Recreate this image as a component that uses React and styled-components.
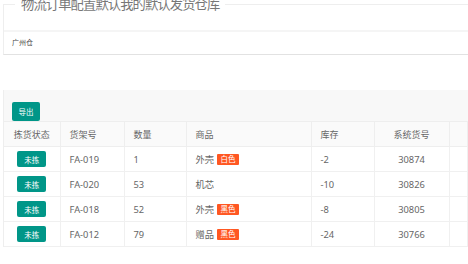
import React from 'react';
import styled, { createGlobalStyle } from 'styled-components';

const Global = createGlobalStyle`
  html, body { margin: 0; padding: 0; background: #fff; }
  body {
    font-family: "Noto Sans", "Noto Sans CJK SC", sans-serif;
    color: #666;
    overflow: hidden;
  }
`;

const Page = styled.div`
  padding-left: 3px;
`;

const Fieldset = styled.fieldset`
  margin: -6px 0 0 0;
  padding: 0;
  min-width: 0;
  border: 1px solid #eee;
  border-right: none;
  border-bottom-color: #e2e2e2;
`;

const Legend = styled.legend`
  margin-left: 11px;
  padding: 0 6px;
  font-size: 13.3px;
  line-height: 20px;
  letter-spacing: -0.9px;
  color: #777;
  font-family: "Noto Sans CJK SC", sans-serif;
  font-weight: 400;
`;

const Card = styled.div`
  margin-top: -9px;
  background: #fff;
`;

const CardHeader = styled.div`
  height: 25px;
  border-bottom: 2px solid #f5f5f5;
`;

const CardBody = styled.div`
  padding: 5px 8px;
  font-size: 7px;
  line-height: 12px;
  color: #444;
`;

const TableBox = styled.div`
  margin-top: 35px;
  border-left: 1px solid #eee;
`;

const Toolbar = styled.div`
  height: 32px;
  box-sizing: border-box;
  padding: 8px 0 0 8px;
  background: #f8f8f8;
  border-bottom: 1px solid #eee;
`;

const Button = styled.button`
  display: inline-flex;
  align-items: center;
  justify-content: center;
  width: ${p => p.$w || 28}px;
  height: ${p => p.$h || 19}px;
  padding: 0;
  border: none;
  border-radius: 2px;
  background: #009688;
  color: #fff;
  font-family: "Noto Sans CJK SC", sans-serif;
  font-size: 7.5px;
  cursor: pointer;
`;

const Table = styled.table`
  width: 100%;
  border-collapse: collapse;
  table-layout: fixed;
`;

const Th = styled.th`
  height: 24px;
  padding: 0 ${p => (p.$center ? 0 : 9)}px;
  text-align: ${p => (p.$center ? 'center' : 'left')};
  font-weight: 400;
  font-size: 9px;
  color: #666;
  background: #fafafa;
  border-right: 1px solid #eee;
  border-bottom: 1px solid #eee;
  white-space: nowrap;
`;

const Td = styled.td`
  height: 24px;
  padding: 0 ${p => (p.$center ? 0 : 9)}px;
  text-align: ${p => (p.$center ? 'center' : 'left')};
  font-size: 9.3px;
  color: #666;
  background: #fff;
  border-right: 1px solid #f0f0f0;
  border-bottom: 1px solid #f0f0f0;
  white-space: nowrap;
  vertical-align: middle;
`;

const Tag = styled.span`
  display: inline-block;
  margin-left: 3px;
  padding: 0 3.5px;
  height: 11px;
  line-height: 11px;
  font-size: 7.5px;
  color: #fff;
  background: #ff5722;
  border-radius: 1px;
  vertical-align: 1px;
`;

const rows = [
  { shelf: 'FA-019', qty: 1, goods: '外壳', tag: '白色', stock: -2, code: 30874 },
  { shelf: 'FA-020', qty: 53, goods: '机芯', tag: null, stock: -10, code: 30826 },
  { shelf: 'FA-018', qty: 52, goods: '外壳', tag: '黑色', stock: -8, code: 30805 },
  { shelf: 'FA-012', qty: 79, goods: '赠品', tag: '黑色', stock: -24, code: 30766 },
];

export default function App() {
  return (
    <Page>
      <Global />
      <Fieldset>
        <Legend>物流订单配置默认我的默认发货仓库</Legend>
        <Card>
          <CardHeader />
          <CardBody>广州仓</CardBody>
        </Card>
      </Fieldset>
      <TableBox>
        <Toolbar>
          <Button>导出</Button>
        </Toolbar>
        <Table>
          <colgroup>
            <col style={{ width: 56 }} />
            <col style={{ width: 64 }} />
            <col style={{ width: 62 }} />
            <col style={{ width: 125 }} />
            <col style={{ width: 63 }} />
            <col style={{ width: 75 }} />
            <col />
          </colgroup>
          <thead>
            <tr>
              <Th $center>拣货状态</Th>
              <Th>货架号</Th>
              <Th>数量</Th>
              <Th>商品</Th>
              <Th>库存</Th>
              <Th $center>系统货号</Th>
              <Th />
            </tr>
          </thead>
          <tbody>
            {rows.map(r => (
              <tr key={r.shelf}>
                <Td $center>
                  <Button $w={29} $h={16}>未拣</Button>
                </Td>
                <Td>{r.shelf}</Td>
                <Td>{r.qty}</Td>
                <Td>
                  {r.goods}
                  {r.tag && <Tag>{r.tag}</Tag>}
                </Td>
                <Td>{r.stock}</Td>
                <Td $center>{r.code}</Td>
                <Td />
              </tr>
            ))}
          </tbody>
        </Table>
      </TableBox>
    </Page>
  );
}
